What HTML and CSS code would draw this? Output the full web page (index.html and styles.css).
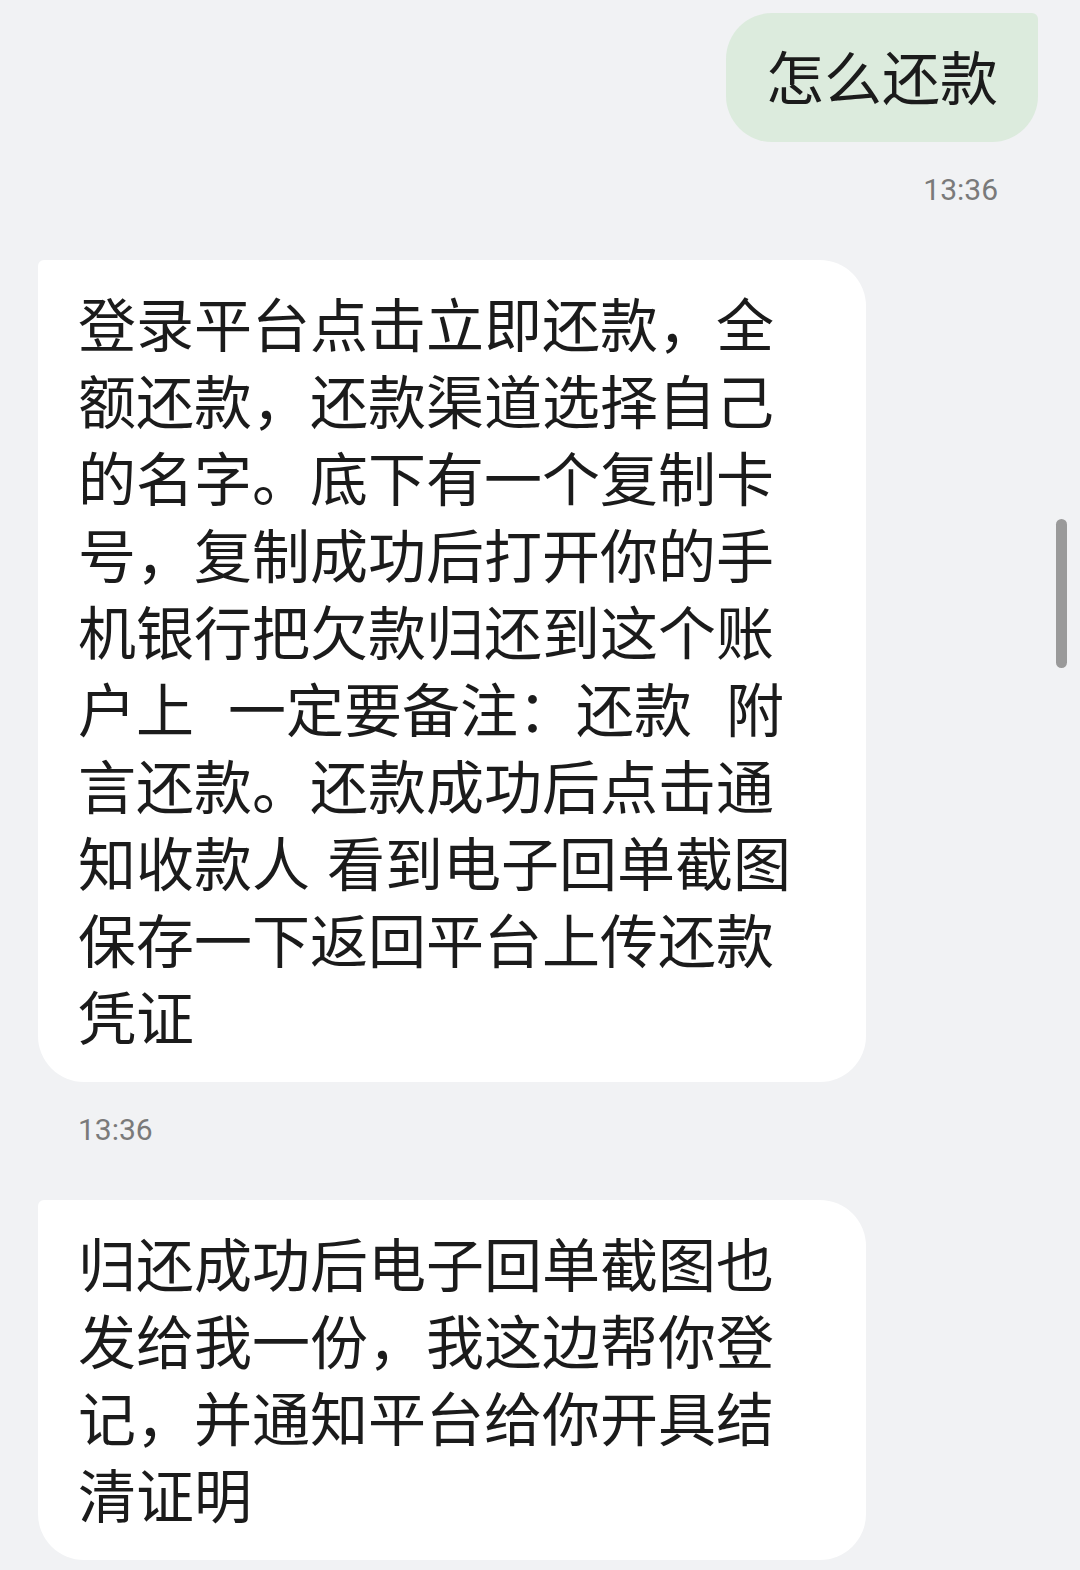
FILE: index.html
```html
<!DOCTYPE html>
<html lang="zh-CN">
<head>
    <meta charset="UTF-8">
    <meta name="viewport" content="width=device-width, initial-scale=1.0">
    <title>聊天</title>
    <link rel="stylesheet" href="styles.css">
</head>
<body>
    <div class="chat">
        <div class="msg msg-out">
            <div class="bubble bubble-out">怎么还款</div>
            <div class="time">13:36</div>
        </div>

        <div class="msg msg-in">
            <div class="bubble bubble-in">登录平台点击立即还款，全<br>额还款，还款渠道选择自己<br>的名字。底下有一个复制卡<br>号，复制成功后打开你的手<br>机银行把欠款归还到这个账<br>户上  一定要备注：还款  附<br>言还款。还款成功后点击通<br>知收款人 看到电子回单截图<br>保存一下返回平台上传还款<br>凭证</div>
            <div class="time">13:36</div>
        </div>

        <div class="msg msg-in">
            <div class="bubble bubble-in">归还成功后电子回单截图也<br>发给我一份，我这边帮你登<br>记，并通知平台给你开具结<br>清证明</div>
        </div>
    </div>

    <div class="scrollbar"></div>
</body>
</html>
```

FILE: styles.css
```css
body {
    margin: 0;
    height: 1570px;
    overflow: hidden;
    background-color: #f1f2f4;
    font-family: "Noto Sans CJK SC", "Noto Sans", sans-serif;
    color: #1b1b1b;
    position: relative;
}
.chat {
    padding-top: 13px;
    display: flex;
    flex-direction: column;
}
.msg {
    display: flex;
    flex-direction: column;
}
.msg-out {
    align-items: flex-end;
    padding-right: 42px;
}
.msg-in {
    align-items: flex-start;
    padding-left: 38px;
}
.bubble {
    font-size: 58px;
    line-height: 77px;
    padding: 24px 40px 28px;
    white-space: pre;
    word-spacing: 4px;
}
.bubble-out {
    background-color: #dcebdd;
    border-radius: 46px 6px 46px 46px;
}
.bubble-in {
    background-color: #fff;
    width: 748px;
    border-radius: 6px 46px 46px 46px;
}
.time {
    font-family: Roboto, "Liberation Sans", sans-serif;
    font-size: 30px;
    line-height: 40px;
    color: #7a7a7a;
    margin: 28px 0 50px;
}
.msg-out .time {
    padding-right: 40px;
}
.msg-in .time {
    padding-left: 40px;
}
.scrollbar {
    position: absolute;
    top: 519px;
    right: 13px;
    width: 11px;
    height: 149px;
    border-radius: 6px;
    background-color: #9a9a9a;
}
```
